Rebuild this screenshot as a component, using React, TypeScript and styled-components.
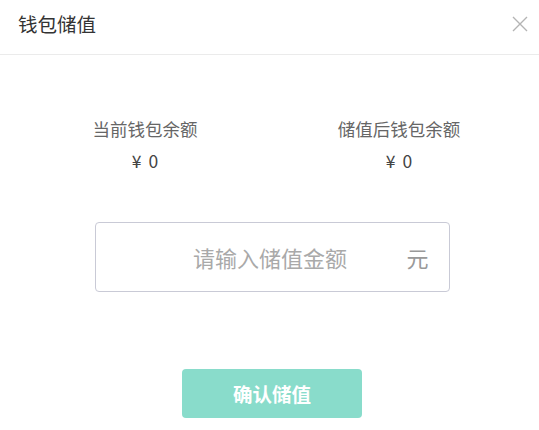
import React from 'react';
import styled, { createGlobalStyle } from 'styled-components';

const GlobalStyle = createGlobalStyle`
  html, body {
    margin: 0;
    padding: 0;
    background: #fff;
  }
  body {
    font-family: "Noto Sans CJK SC", "Noto Sans", sans-serif;
  }
`;

const Dialog = styled.div`
  width: 539px;
  height: 430px;
  background: #fff;
  display: flex;
  flex-direction: column;
`;

const Header = styled.div`
  height: 55px;
  box-sizing: border-box;
  border-bottom: 1px solid #ebebeb;
  display: flex;
  align-items: center;
  justify-content: space-between;
  padding: 0 8px 0 18px;
`;

const Title = styled.div`
  font-size: 19.5px;
  line-height: 26px;
  color: #333;
  margin-top: -6px;
`;

const CloseButton = styled.button`
  border: none;
  background: none;
  padding: 0;
  width: 22px;
  height: 22px;
  display: flex;
  align-items: center;
  justify-content: center;
  cursor: pointer;
  margin-top: -6px;
`;

const Body = styled.div`
  flex: 1;
  display: flex;
  flex-direction: column;
  align-items: center;
  padding: 62px 13px 0 18px;
`;

const BalanceRow = styled.div`
  width: 100%;
  display: grid;
  grid-template-columns: 1fr 1fr;
`;

const BalanceItem = styled.div`
  display: flex;
  flex-direction: column;
  align-items: center;
`;

const Label = styled.div`
  font-size: 17.5px;
  line-height: 24px;
  color: #666;
`;

const Amount = styled.div`
  font-size: 17.5px;
  line-height: 24px;
  color: #444;
  margin-top: 8px;
`;

const Currency = styled.span`
  margin-right: 7px;
`;

const InputBox = styled.label`
  margin-top: 49px;
  width: 355px;
  height: 70px;
  box-sizing: border-box;
  border: 1px solid #c9cad6;
  border-radius: 4px;
  display: flex;
  align-items: center;
  padding: 0 20px 0 0;
`;

const AmountInput = styled.input`
  flex: 1;
  min-width: 0;
  border: none;
  outline: none;
  background: transparent;
  text-align: center;
  font-family: inherit;
  font-size: 22px;
  color: #333;
  padding: 0 0 0 38px;

  &::placeholder {
    color: #a9a9a9;
  }
`;

const Unit = styled.span`
  font-size: 22px;
  color: #999;
`;

const SubmitButton = styled.button`
  margin-top: 77px;
  width: 180px;
  height: 49px;
  border: none;
  border-radius: 4px;
  background: #89dccb;
  color: #fff;
  font-family: inherit;
  font-size: 19.5px;
  font-weight: bold;
  cursor: pointer;
`;

const CloseIcon = () => (
  <svg width="16" height="16" viewBox="0 0 16 16">
    <path d="M1 1 L15 15 M15 1 L1 15" stroke="#b4b4b4" strokeWidth="1.4" fill="none" />
  </svg>
);

export default function App() {
  return (
    <>
      <GlobalStyle />
      <Dialog>
        <Header>
          <Title>钱包储值</Title>
          <CloseButton aria-label="关闭">
            <CloseIcon />
          </CloseButton>
        </Header>
        <Body>
          <BalanceRow>
            <BalanceItem>
              <Label>当前钱包余额</Label>
              <Amount>
                <Currency>¥</Currency>0
              </Amount>
            </BalanceItem>
            <BalanceItem>
              <Label>储值后钱包余额</Label>
              <Amount>
                <Currency>¥</Currency>0
              </Amount>
            </BalanceItem>
          </BalanceRow>
          <InputBox>
            <AmountInput placeholder="请输入储值金额" />
            <Unit>元</Unit>
          </InputBox>
          <SubmitButton>确认储值</SubmitButton>
        </Body>
      </Dialog>
    </>
  );
}
